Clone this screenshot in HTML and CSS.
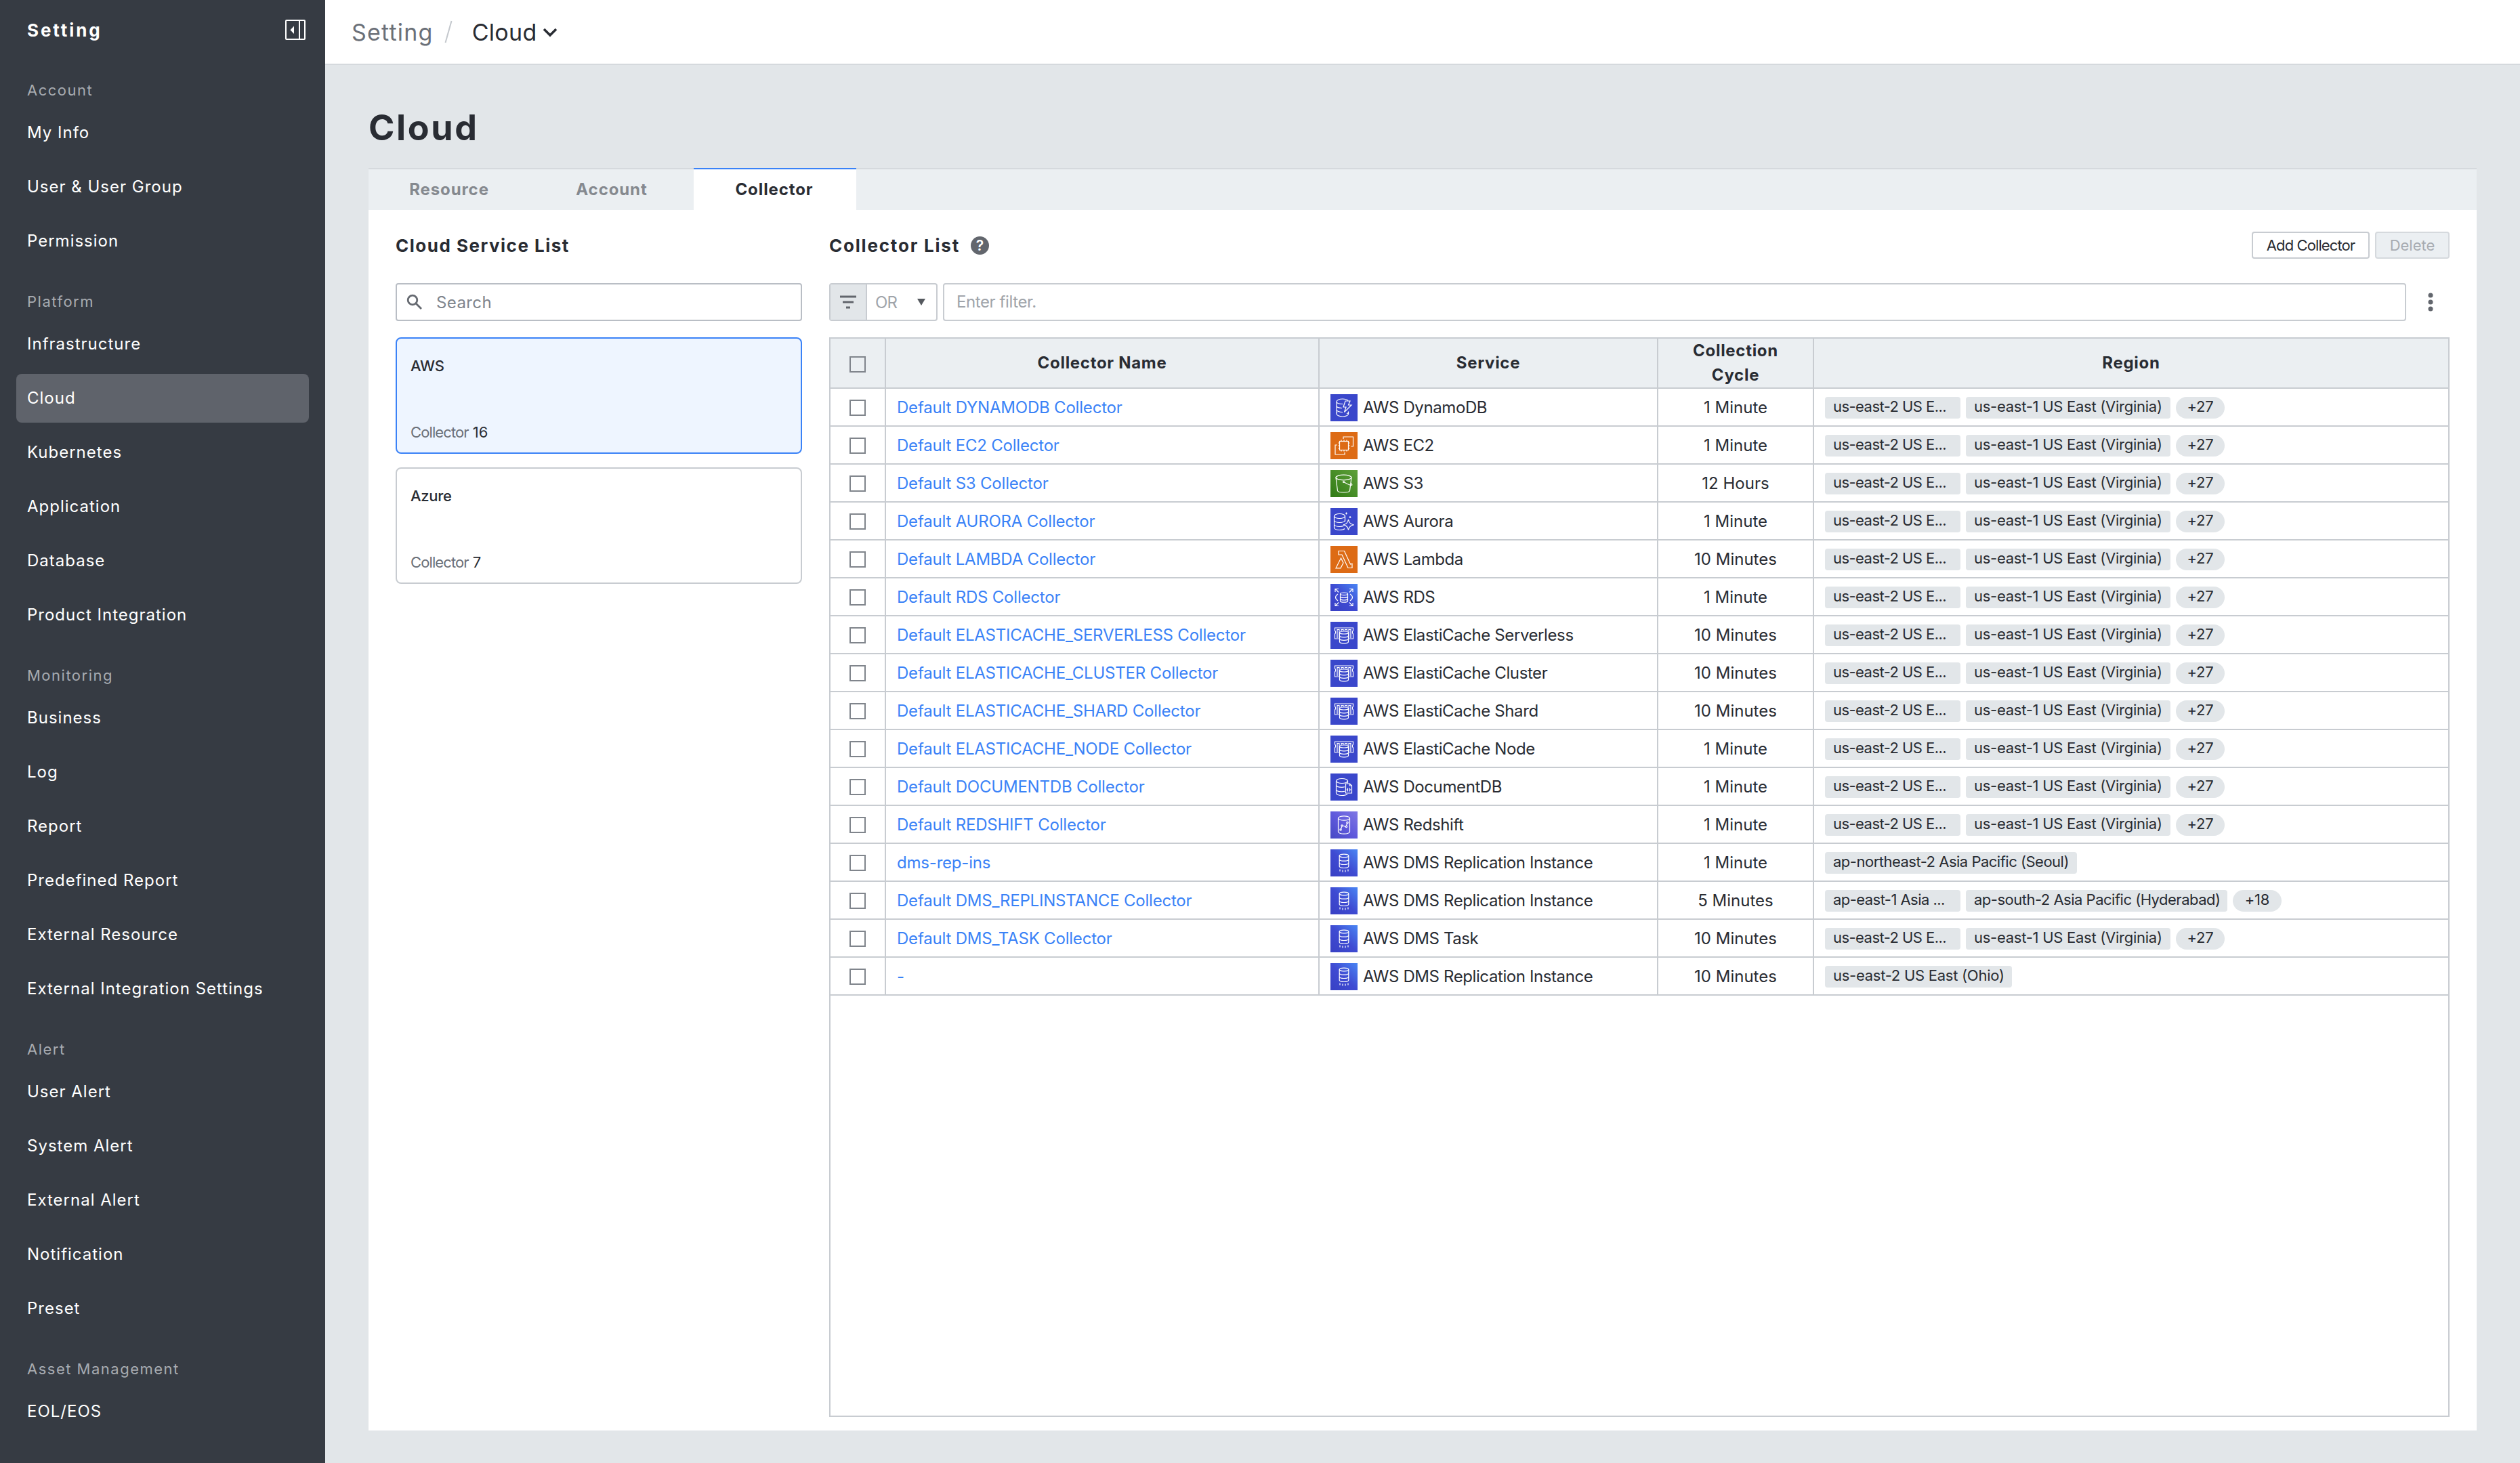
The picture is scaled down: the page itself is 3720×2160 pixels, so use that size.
FILE: index.html
```html
<!DOCTYPE html>
<html lang="en">

<head>
  <meta charset="utf-8">
  <meta name="viewport" content="width=device-width, initial-scale=1.0">
  <title>Cloud</title>
  <link rel="stylesheet" href="styles.css">
</head>

<body>
  <!-- icon symbols -->
  <svg class="sprite" xmlns="http://www.w3.org/2000/svg">
    <defs>
      <linearGradient id="g-green" x1="0" y1="1" x2="1" y2="0">
        <stop offset="0" stop-color="#2f7a14" />
        <stop offset="1" stop-color="#5fa03a" />
      </linearGradient>
      <linearGradient id="g-blue" x1="0" y1="1" x2="1" y2="0">
        <stop offset="0" stop-color="#3840c4" />
        <stop offset="0.5" stop-color="#3f4bd2" />
        <stop offset="1" stop-color="#4a86f4" />
      </linearGradient>
      <linearGradient id="g-violet" x1="0" y1="1" x2="1" y2="0">
        <stop offset="0" stop-color="#4648c4" />
        <stop offset="0.5" stop-color="#6059dc" />
        <stop offset="1" stop-color="#8078e4" />
      </linearGradient>
    </defs>
    <symbol id="dynamodb" viewBox="0 0 40 40">
      <rect width="40" height="40" fill="#3a47cb" />
      <path d="M26 9.500C24.500 7.800 21.500 7 18 7c-5 0-9 1.800-9 4v18c0 2.200 4 4 9 4s8.500-1.800 8.500-4v-3.500M9 11c0 2 4 3.500 9.500 3.500M9 17c0 2 3.500 3.300 8 3.500M9 23c0 2 4 3.500 9 3.500M9 29c0-1 .5-1.500 1-2M24 28.800c1.500-.5 2.500-1.200 2.500-2" />
      <path d="M22 10h7l-2.500 6H31L20.500 26.500 23 19h-4z" />
    </symbol>
    <symbol id="ec2" viewBox="0 0 40 40">
      <rect width="40" height="40" fill="#dd6b15" />
      <rect x="13.500" y="13.500" width="13" height="13" />
      <path d="M16 13.500v-2M20 13.500v-2M24 13.500v-2M16 28.500v-2M20 28.500v-2M24 28.500v-2M13.500 16h-2M13.500 20h-2M13.500 24h-2M28.500 16h-2M28.500 20h-2M28.500 24h-2" />
      <path d="M19 10V7h14.500v14H30.500M10 19H7v14h14v-3" />
    </symbol>
    <symbol id="s3" viewBox="0 0 40 40">
      <rect width="40" height="40" fill="url(#g-green)" />
      <ellipse cx="19.500" cy="11" rx="11.500" ry="3.800" />
      <path d="M8 11l2.500 19.500c.2 1.500 4 2.500 9 2.500s8.800-1 9-2.500L31 11" />
      <circle cx="19.500" cy="17.500" r="1" />
      <path d="M20.500 18c5 3 9.500 4.800 11 4.300 1-.5-.5-2.200-1.800-3.200" />
    </symbol>
    <symbol id="aurora" viewBox="0 0 40 40">
      <rect width="40" height="40" fill="#3a47cb" />
      <ellipse cx="13.500" cy="12" rx="8" ry="3.500" />
      <path d="M5.500 12v17c0 2 3.500 3.500 8 3.500 3 0 6-.6 7.500-2M21.500 12v8M5.500 18c0 2 3.500 3.500 8 3.500s8-1.500 8-3.500M5.500 24c0 2 3.500 3.500 8 3.500 2.500 0 4.500-.4 6-1.200" />
      <path d="M26.500 17c.8 5 3 7 8 7.800-5 .8-7.200 2.700-8 7.700-.8-5-3-7-7.500-7.700 4.500-.8 6.700-2.800 7.500-7.800z" />
      <path d="M23.500 6.500v3M22 8h3M29 12v3M27.500 13.500h3" />
    </symbol>
    <symbol id="lambda" viewBox="0 0 40 40">
      <rect width="40" height="40" fill="#dd6b15" />
      <path d="M12 7.500h8.500L29.500 27l2.500-.8v6.300h-6L17 13h-5zM15.500 18l3.500 7-4 7.800H8z" />
    </symbol>
    <symbol id="rds" viewBox="0 0 40 40">
      <rect width="40" height="40" fill="url(#g-blue)" />
      <ellipse cx="20" cy="14.800" rx="5.500" ry="1.800" />
      <path d="M14.500 14.800v10.400c0 1.200 2.500 2 5.500 2s5.500-.8 5.500-2V14.800M14.500 18.500c0 1.200 2.500 2 5.500 2s5.500-.8 5.500-2M14.500 22c0 1.200 2.500 2 5.500 2s5.500-.8 5.500-2" />
      <path d="M7 12V7.500h5M7.500 7.500l4.500 5M33 12V7.500h-5M32.500 7.500L28 12.500M7 28v4.500h5M7.500 32.500l4.500-5M33 28v4.500h-5M32.500 32.500l-4.500-5" />
      <path d="M11 15c-2 1.500-3.500 3-3.500 5s1.500 3.500 3.500 5M29 15c2 1.500 3.500 3 3.500 5s-1.500 3.500-3.500 5" />
    </symbol>
    <symbol id="elasticache" viewBox="0 0 40 40">
      <rect width="40" height="40" fill="#3a47cb" />
      <path d="M12.500 25H6.500v-7C8 17 8 14 6.500 13V9h27v4c-1.500 1-1.500 4 0 5v7h-6M10 24v-12.500h3V24M30 24v-12.500h-3V24M16 14v-2.500h3V13.500M21.500 13.500v-2h3V14" />
      <ellipse cx="20" cy="16" rx="6.500" ry="2" />
      <path d="M13.500 16v13.500c0 1.300 3 2.300 6.500 2.300s6.500-1 6.500-2.300V16M13.500 20.500c0 1.300 3 2.300 6.500 2.300s6.500-1 6.500-2.300M13.500 25c0 1.300 3 2.300 6.500 2.300s6.500-1 6.500-2.300" />
    </symbol>
    <symbol id="documentdb" viewBox="0 0 40 40">
      <rect width="40" height="40" fill="#3a47cb" />
      <ellipse cx="17" cy="11" rx="8.500" ry="3.500" />
      <path d="M8.500 11v18c0 2 3.800 3.500 8.500 3.500 3.500 0 6.500-.8 8-2.200M25.500 11v3.500M8.500 17c0 2 3.800 3.300 8.500 3.300 1.500 0 3-.2 4-.5M8.500 23.500c0 2 3.800 3.300 8.500 3.300 1.500 0 3-.2 4-.4" />
      <path d="M22.500 15h6l3 3v11h-9zM28.500 15v3h3" />
      <path d="M25.500 21.500v2l-1 .5 1 .5v2M28.500 21.500v2l1 .5-1 .5v2" />
    </symbol>
    <symbol id="redshift" viewBox="0 0 40 40">
      <rect width="40" height="40" fill="url(#g-violet)" />
      <ellipse cx="20" cy="10" rx="8.500" ry="3.200" />
      <path d="M11.500 10v20c0 1.800 3.800 3.200 8.500 3.200s8.500-1.400 8.500-3.200V10" />
      <path d="M15.500 26l1.500-4M18 21l4.500 1.500M23.500 21.500l1-4" />
      <circle cx="15" cy="27" r="1.200" />
      <circle cx="17" cy="21" r="1.200" />
      <circle cx="23.500" cy="22.500" r="1.200" />
      <circle cx="25" cy="16.500" r="1.200" />
    </symbol>
    <symbol id="dms" viewBox="0 0 40 40">
      <rect width="40" height="40" fill="url(#g-blue)" />
      <ellipse cx="20" cy="9.500" rx="6.800" ry="2.300" />
      <path d="M13.200 9.500V25c0 1.500 3 2.500 6.800 2.500s6.800-1 6.800-2.500V9.500M13.200 14.700c0 1.500 3 2.500 6.800 2.500s6.800-1 6.800-2.500M13.200 20c0 1.500 3 2.500 6.800 2.500s6.800-1 6.800-2.500" />
      <path d="M14 29.500v3M18 30.500v3M22 30.500v3M26 29.500v3" />
    </symbol>
  </svg>

  <div class="app">
    <nav class="sidebar">
      <div class="sidebar-head">
        <span>Setting</span>
        <svg class="collapse-icon" viewBox="0 0 32 32">
          <rect x="2" y="2" width="28" height="28" rx="1" />
          <path d="M22 2v28" />
          <path class="arrow" d="M14 10.500v11.500L8.500 16.200z" />
        </svg>
      </div>
      <h4>Account</h4>
      <a>My Info</a>
      <a>User &amp; User Group</a>
      <a>Permission</a>
      <h4>Platform</h4>
      <a>Infrastructure</a>
      <a class="active">Cloud</a>
      <a>Kubernetes</a>
      <a>Application</a>
      <a>Database</a>
      <a>Product Integration</a>
      <h4>Monitoring</h4>
      <a>Business</a>
      <a>Log</a>
      <a>Report</a>
      <a>Predefined Report</a>
      <a>External Resource</a>
      <a>External Integration Settings</a>
      <h4>Alert</h4>
      <a>User Alert</a>
      <a>System Alert</a>
      <a>External Alert</a>
      <a>Notification</a>
      <a>Preset</a>
      <h4>Asset Management</h4>
      <a>EOL/EOS</a>
    </nav>

    <div class="main">
      <header class="topbar">
        <span class="crumb">Setting</span>
        <svg class="slash" viewBox="0 0 12 34"><path d="M10.500 1L1.500 33" /></svg>
        <span class="crumb current">Cloud</span>
        <svg class="chevron" viewBox="0 0 24 24"><path d="M3 8l9 9 9-9" /></svg>
      </header>

      <div class="page">
        <h1>Cloud</h1>
        <div class="tabs">
          <div class="tab">Resource</div>
          <div class="tab">Account</div>
          <div class="tab active">Collector</div>
        </div>

        <div class="panel">
          <section class="services">
            <div class="section-head">
              <h2>Cloud Service List</h2>
            </div>
            <div class="search">
              <svg viewBox="0 0 24 24"><circle cx="9" cy="9" r="6.800" /><path d="M14 14l8 8" /></svg>
              <span>Search</span>
            </div>
            <div class="card active">
              <div class="card-name">AWS</div>
              <div class="card-count"><span>Collector</span> 16</div>
            </div>
            <div class="card">
              <div class="card-name">Azure</div>
              <div class="card-count"><span>Collector</span> 7</div>
            </div>
          </section>

          <section class="collectors">
            <div class="section-head">
              <h2>Collector List</h2>
              <span class="help">?</span>
              <div class="actions">
                <button class="btn-add">Add Collector</button>
                <button class="btn-delete" disabled>Delete</button>
              </div>
            </div>
            <div class="filter">
              <div class="filter-mode">
                <div class="filter-icon">
                  <svg viewBox="0 0 24 24"><path d="M0 4h24M4 12h16M9 20h6" /></svg>
                </div>
                <span>OR</span>
                <svg class="caret" viewBox="0 0 12 10"><path d="M0 0h12L6 10z" /></svg>
              </div>
              <div class="filter-input">Enter filter.</div>
              <svg class="more" viewBox="0 0 8 28">
                <circle cx="4" cy="4" r="3.500" />
                <circle cx="4" cy="14" r="3.500" />
                <circle cx="4" cy="24" r="3.500" />
              </svg>
            </div>

            <div class="grid">
              <div class="row head">
                <div class="cell check"><i></i></div>
                <div class="cell">Collector Name</div>
                <div class="cell">Service</div>
                <div class="cell">Collection<br>Cycle</div>
                <div class="cell">Region</div>
              </div>
              <div class="row">
                <div class="cell check"><i></i></div>
                <div class="cell name">Default DYNAMODB Collector</div>
                <div class="cell service"><svg><use href="#dynamodb" /></svg>AWS DynamoDB</div>
                <div class="cell cycle">1 Minute</div>
                <div class="cell region"><span class="tag short">us-east-2 US E...</span><span class="tag">us-east-1 US East (Virginia)</span><span class="pill">+27</span></div>
              </div>
              <div class="row">
                <div class="cell check"><i></i></div>
                <div class="cell name">Default EC2 Collector</div>
                <div class="cell service"><svg><use href="#ec2" /></svg>AWS EC2</div>
                <div class="cell cycle">1 Minute</div>
                <div class="cell region"><span class="tag short">us-east-2 US E...</span><span class="tag">us-east-1 US East (Virginia)</span><span class="pill">+27</span></div>
              </div>
              <div class="row">
                <div class="cell check"><i></i></div>
                <div class="cell name">Default S3 Collector</div>
                <div class="cell service"><svg><use href="#s3" /></svg>AWS S3</div>
                <div class="cell cycle">12 Hours</div>
                <div class="cell region"><span class="tag short">us-east-2 US E...</span><span class="tag">us-east-1 US East (Virginia)</span><span class="pill">+27</span></div>
              </div>
              <div class="row">
                <div class="cell check"><i></i></div>
                <div class="cell name">Default AURORA Collector</div>
                <div class="cell service"><svg><use href="#aurora" /></svg>AWS Aurora</div>
                <div class="cell cycle">1 Minute</div>
                <div class="cell region"><span class="tag short">us-east-2 US E...</span><span class="tag">us-east-1 US East (Virginia)</span><span class="pill">+27</span></div>
              </div>
              <div class="row">
                <div class="cell check"><i></i></div>
                <div class="cell name">Default LAMBDA Collector</div>
                <div class="cell service"><svg><use href="#lambda" /></svg>AWS Lambda</div>
                <div class="cell cycle">10 Minutes</div>
                <div class="cell region"><span class="tag short">us-east-2 US E...</span><span class="tag">us-east-1 US East (Virginia)</span><span class="pill">+27</span></div>
              </div>
              <div class="row">
                <div class="cell check"><i></i></div>
                <div class="cell name">Default RDS Collector</div>
                <div class="cell service"><svg><use href="#rds" /></svg>AWS RDS</div>
                <div class="cell cycle">1 Minute</div>
                <div class="cell region"><span class="tag short">us-east-2 US E...</span><span class="tag">us-east-1 US East (Virginia)</span><span class="pill">+27</span></div>
              </div>
              <div class="row">
                <div class="cell check"><i></i></div>
                <div class="cell name">Default ELASTICACHE_SERVERLESS Collector</div>
                <div class="cell service"><svg><use href="#elasticache" /></svg>AWS ElastiCache Serverless</div>
                <div class="cell cycle">10 Minutes</div>
                <div class="cell region"><span class="tag short">us-east-2 US E...</span><span class="tag">us-east-1 US East (Virginia)</span><span class="pill">+27</span></div>
              </div>
              <div class="row">
                <div class="cell check"><i></i></div>
                <div class="cell name">Default ELASTICACHE_CLUSTER Collector</div>
                <div class="cell service"><svg><use href="#elasticache" /></svg>AWS ElastiCache Cluster</div>
                <div class="cell cycle">10 Minutes</div>
                <div class="cell region"><span class="tag short">us-east-2 US E...</span><span class="tag">us-east-1 US East (Virginia)</span><span class="pill">+27</span></div>
              </div>
              <div class="row">
                <div class="cell check"><i></i></div>
                <div class="cell name">Default ELASTICACHE_SHARD Collector</div>
                <div class="cell service"><svg><use href="#elasticache" /></svg>AWS ElastiCache Shard</div>
                <div class="cell cycle">10 Minutes</div>
                <div class="cell region"><span class="tag short">us-east-2 US E...</span><span class="tag">us-east-1 US East (Virginia)</span><span class="pill">+27</span></div>
              </div>
              <div class="row">
                <div class="cell check"><i></i></div>
                <div class="cell name">Default ELASTICACHE_NODE Collector</div>
                <div class="cell service"><svg><use href="#elasticache" /></svg>AWS ElastiCache Node</div>
                <div class="cell cycle">1 Minute</div>
                <div class="cell region"><span class="tag short">us-east-2 US E...</span><span class="tag">us-east-1 US East (Virginia)</span><span class="pill">+27</span></div>
              </div>
              <div class="row">
                <div class="cell check"><i></i></div>
                <div class="cell name">Default DOCUMENTDB Collector</div>
                <div class="cell service"><svg><use href="#documentdb" /></svg>AWS DocumentDB</div>
                <div class="cell cycle">1 Minute</div>
                <div class="cell region"><span class="tag short">us-east-2 US E...</span><span class="tag">us-east-1 US East (Virginia)</span><span class="pill">+27</span></div>
              </div>
              <div class="row">
                <div class="cell check"><i></i></div>
                <div class="cell name">Default REDSHIFT Collector</div>
                <div class="cell service"><svg><use href="#redshift" /></svg>AWS Redshift</div>
                <div class="cell cycle">1 Minute</div>
                <div class="cell region"><span class="tag short">us-east-2 US E...</span><span class="tag">us-east-1 US East (Virginia)</span><span class="pill">+27</span></div>
              </div>
              <div class="row">
                <div class="cell check"><i></i></div>
                <div class="cell name">dms-rep-ins</div>
                <div class="cell service"><svg><use href="#dms" /></svg>AWS DMS Replication Instance</div>
                <div class="cell cycle">1 Minute</div>
                <div class="cell region"><span class="tag seoul">ap-northeast-2 Asia Pacific (Seoul)</span></div>
              </div>
              <div class="row">
                <div class="cell check"><i></i></div>
                <div class="cell name">Default DMS_REPLINSTANCE Collector</div>
                <div class="cell service"><svg><use href="#dms" /></svg>AWS DMS Replication Instance</div>
                <div class="cell cycle">5 Minutes</div>
                <div class="cell region"><span class="tag short">ap-east-1 Asia ...</span><span class="tag hyderabad">ap-south-2 Asia Pacific (Hyderabad)</span><span class="pill">+18</span></div>
              </div>
              <div class="row">
                <div class="cell check"><i></i></div>
                <div class="cell name">Default DMS_TASK Collector</div>
                <div class="cell service"><svg><use href="#dms" /></svg>AWS DMS Task</div>
                <div class="cell cycle">10 Minutes</div>
                <div class="cell region"><span class="tag short">us-east-2 US E...</span><span class="tag">us-east-1 US East (Virginia)</span><span class="pill">+27</span></div>
              </div>
              <div class="row">
                <div class="cell check"><i></i></div>
                <div class="cell name">-</div>
                <div class="cell service"><svg><use href="#dms" /></svg>AWS DMS Replication Instance</div>
                <div class="cell cycle">10 Minutes</div>
                <div class="cell region"><span class="tag ohio">us-east-2 US East (Ohio)</span></div>
              </div>
            </div>
          </section>
        </div>
      </div>
    </div>
  </div>
</body>

</html>
```
FILE: styles.css
```css
* {
  box-sizing: border-box;
}

body {
  margin: 0;
  font-family: Inter, "Liberation Sans", sans-serif;
  font-size: 24px;
  color: #292c33;
  background: #e2e6e9;
  overflow: hidden;
}

svg {
  fill: none;
  flex: none;
}

h1,
h2,
h4 {
  margin: 0;
}

/* kept rendered so the gradients resolve */
.sprite {
  position: absolute;
  width: 0;
  height: 0;
}

.app {
  display: flex;
  height: 2160px;
}

/* sidebar */
.sidebar {
  flex: none;
  width: 480px;
  padding: 0 24px;
  background: #363b43;
  color: #fff;
  overflow: hidden;
}

.sidebar-head {
  display: flex;
  align-items: center;
  justify-content: space-between;
  height: 88px;
  padding: 0 4px 0 16px;
  font-size: 26px;
  font-weight: 700;
  letter-spacing: 2.9px;
}

.collapse-icon {
  width: 32px;
  height: 32px;
  stroke: #fff;
  stroke-width: 2;
}

.collapse-icon .arrow {
  fill: #fff;
  stroke: none;
}

.sidebar h4 {
  height: 52px;
  margin-top: 28px;
  padding-left: 16px;
  line-height: 51px;
  font-size: 22px;
  font-weight: 400;
  letter-spacing: 1.5px;
  color: #a7abb1;
}

.sidebar-head + h4 {
  margin-top: 20px;
}

.sidebar a {
  display: block;
  height: 72px;
  margin-bottom: 8px;
  padding-left: 16px;
  border-radius: 8px;
  line-height: 71px;
  letter-spacing: 1px;
}

.sidebar a.active {
  background: #5f636b;
}

/* top bar */
.main {
  flex: 1;
  display: flex;
  flex-direction: column;
}

.topbar {
  display: flex;
  align-items: center;
  height: 96px;
  padding-left: 39px;
  background: #fff;
  border-bottom: 2px solid #d5d9dd;
  font-size: 34px;
}

.crumb {
  color: #6b7078;
  letter-spacing: 1.2px;
}

.crumb.current {
  color: #292c33;
  letter-spacing: 0.3px;
}

.slash {
  width: 12px;
  height: 34px;
  margin: 0 29px 0 16px;
  stroke: #c4c8cd;
  stroke-width: 2;
}

.chevron {
  width: 24px;
  height: 24px;
  margin-left: 7px;
  stroke: #292c33;
  stroke-width: 3.5;
}

/* page */
.page {
  flex: 1;
  display: flex;
  flex-direction: column;
  padding: 0 64px 48px;
}

h1 {
  height: 152px;
  line-height: 186px;
  font-size: 52px;
  font-weight: 700;
  letter-spacing: 2.6px;
}

.tabs {
  display: flex;
  height: 62px;
  background: #ebeff2;
  border-top: 2px solid #d5d9dd;
}

.tab {
  width: 240px;
  height: 60px;
  padding-right: 2px;
  line-height: 60px;
  text-align: center;
  font-weight: 700;
  letter-spacing: 0.9px;
  color: #85898f;
}

.tab.active {
  height: 62px;
  margin-top: -2px;
  border-top: 2px solid #3a82f7;
  background: #fff;
  color: #292c33;
}

.panel {
  flex: 1;
  display: flex;
  gap: 40px;
  padding: 0 40px 20px;
  background: #fff;
}

.section-head {
  display: flex;
  align-items: center;
  height: 104px;
  margin-bottom: 4px;
}

h2 {
  font-size: 26px;
  font-weight: 700;
  letter-spacing: 1.5px;
}

.collectors h2 {
  letter-spacing: 1.8px;
}

/* service list */
.services {
  width: 600px;
}

.search {
  display: flex;
  align-items: center;
  height: 56px;
  padding-left: 14px;
  border: 2px solid #b9bec5;
  border-radius: 4px;
  color: #80858c;
  letter-spacing: 0.4px;
}

.search svg {
  width: 24px;
  height: 24px;
  margin-right: 20px;
  stroke: #666a71;
  stroke-width: 2.8;
}

.card {
  display: flex;
  flex-direction: column;
  justify-content: space-between;
  height: 172px;
  margin-top: 20px;
  padding: 24px 20px 14px;
  border: 2px solid #c8ccd1;
  border-radius: 8px;
  font-size: 22px;
  line-height: 32px;
}

.search + .card {
  margin-top: 24px;
}

.card.active {
  border-color: #3a82f7;
  background: #eef5ff;
}

.card-name {
  font-weight: 500;
  letter-spacing: -0.3px;
}

.card-count span {
  color: #6b7078;
  letter-spacing: -0.9px;
}

/* collector list */
.collectors {
  flex: 1;
  display: flex;
  flex-direction: column;
}

.help {
  width: 27px;
  height: 27px;
  margin-left: 16px;
  border-radius: 50%;
  background: #62666d;
  color: #fff;
  font-size: 21px;
  font-weight: 600;
  line-height: 27px;
  text-align: center;
}

.actions {
  display: flex;
  gap: 8px;
  margin-left: auto;
}

.actions button {
  height: 40px;
  padding: 0;
  border: 2px solid #c8ccd1;
  border-radius: 4px;
  background: #fff;
  color: #292c33;
  font: 22px Inter, sans-serif;
}

.actions .btn-add {
  width: 174px;
  letter-spacing: -0.9px;
}

.actions .btn-delete {
  width: 110px;
  border-color: #d5d9dd;
  background: #ebeff2;
  color: #a7abb1;
}

.filter {
  display: flex;
  align-items: center;
  height: 56px;
  margin-bottom: 24px;
}

.filter-mode {
  display: flex;
  align-items: center;
  width: 160px;
  height: 56px;
  border: 2px solid #c8ccd1;
  border-radius: 4px;
  color: #a0a4aa;
}

.filter-icon {
  display: flex;
  align-items: center;
  justify-content: center;
  width: 54px;
  height: 52px;
  margin-right: 12px;
  border-right: 2px solid #c8ccd1;
  background: #e2e6e9;
}

.filter-icon svg {
  width: 24px;
  height: 24px;
  stroke: #62666d;
  stroke-width: 3;
}

.filter-mode span {
  letter-spacing: -0.8px;
}

.caret {
  width: 12px;
  height: 10px;
  margin-left: auto;
  margin-right: 16px;
  fill: #55595f;
}

.filter-input {
  flex: 1;
  height: 56px;
  margin-left: 8px;
  padding-left: 18px;
  border: 2px solid #c8ccd1;
  border-radius: 4px;
  line-height: 52px;
  color: #a0a4aa;
  letter-spacing: -0.4px;
}

.more {
  width: 8px;
  height: 28px;
  margin: 0 24px 0 32px;
  fill: #62666d;
}

/* grid */
.grid {
  flex: 1;
  border: 2px solid #c8ccd1;
}

.row {
  display: grid;
  grid-template-columns: 82px 640px 500px 230px 1fr;
  height: 56px;
  border-bottom: 2px solid #c8ccd1;
}

.cell {
  display: flex;
  align-items: center;
  padding: 0 16px;
  border-right: 2px solid #c8ccd1;
  white-space: nowrap;
}

.cell:last-child {
  border-right: none;
}

.row.head {
  height: 74px;
  background: #ebeff2;
}

.row.head .cell {
  justify-content: center;
  text-align: center;
  line-height: 36px;
  font-weight: 700;
  letter-spacing: 0.7px;
}

.check {
  justify-content: center;
}

.check i {
  width: 24px;
  height: 24px;
  margin-top: 2px;
  border: 2px solid #80858c;
  background: #fff;
}

.head .check i {
  margin-top: 4px;
  background: transparent;
}

.name {
  color: #3a82f7;
  letter-spacing: -0.2px;
}

.service {
  gap: 8px;
  letter-spacing: -0.4px;
}

.service svg {
  width: 40px;
  height: 40px;
  margin-top: 2px;
  stroke: #fff;
  stroke-width: 1.2;
}

symbol > rect:first-child {
  stroke: none;
}

.cycle {
  justify-content: center;
}

.region {
  gap: 8px;
}

.tag,
.pill {
  width: 302px;
  height: 32px;
  margin-top: 2px;
  padding-left: 12px;
  border-radius: 4px;
  background: #e2e6e9;
  font-size: 22px;
  line-height: 29px;
  letter-spacing: -0.26px;
}

.tag.short {
  width: 200px;
  letter-spacing: -0.55px;
}

.tag.seoul {
  width: 372px;
  letter-spacing: -0.5px;
}

.tag.hyderabad {
  width: 386px;
  letter-spacing: -0.5px;
}

.tag.ohio {
  width: 276px;
}

.pill {
  width: 72px;
  padding-left: 0;
  border-radius: 16px;
  text-align: center;
}
```
